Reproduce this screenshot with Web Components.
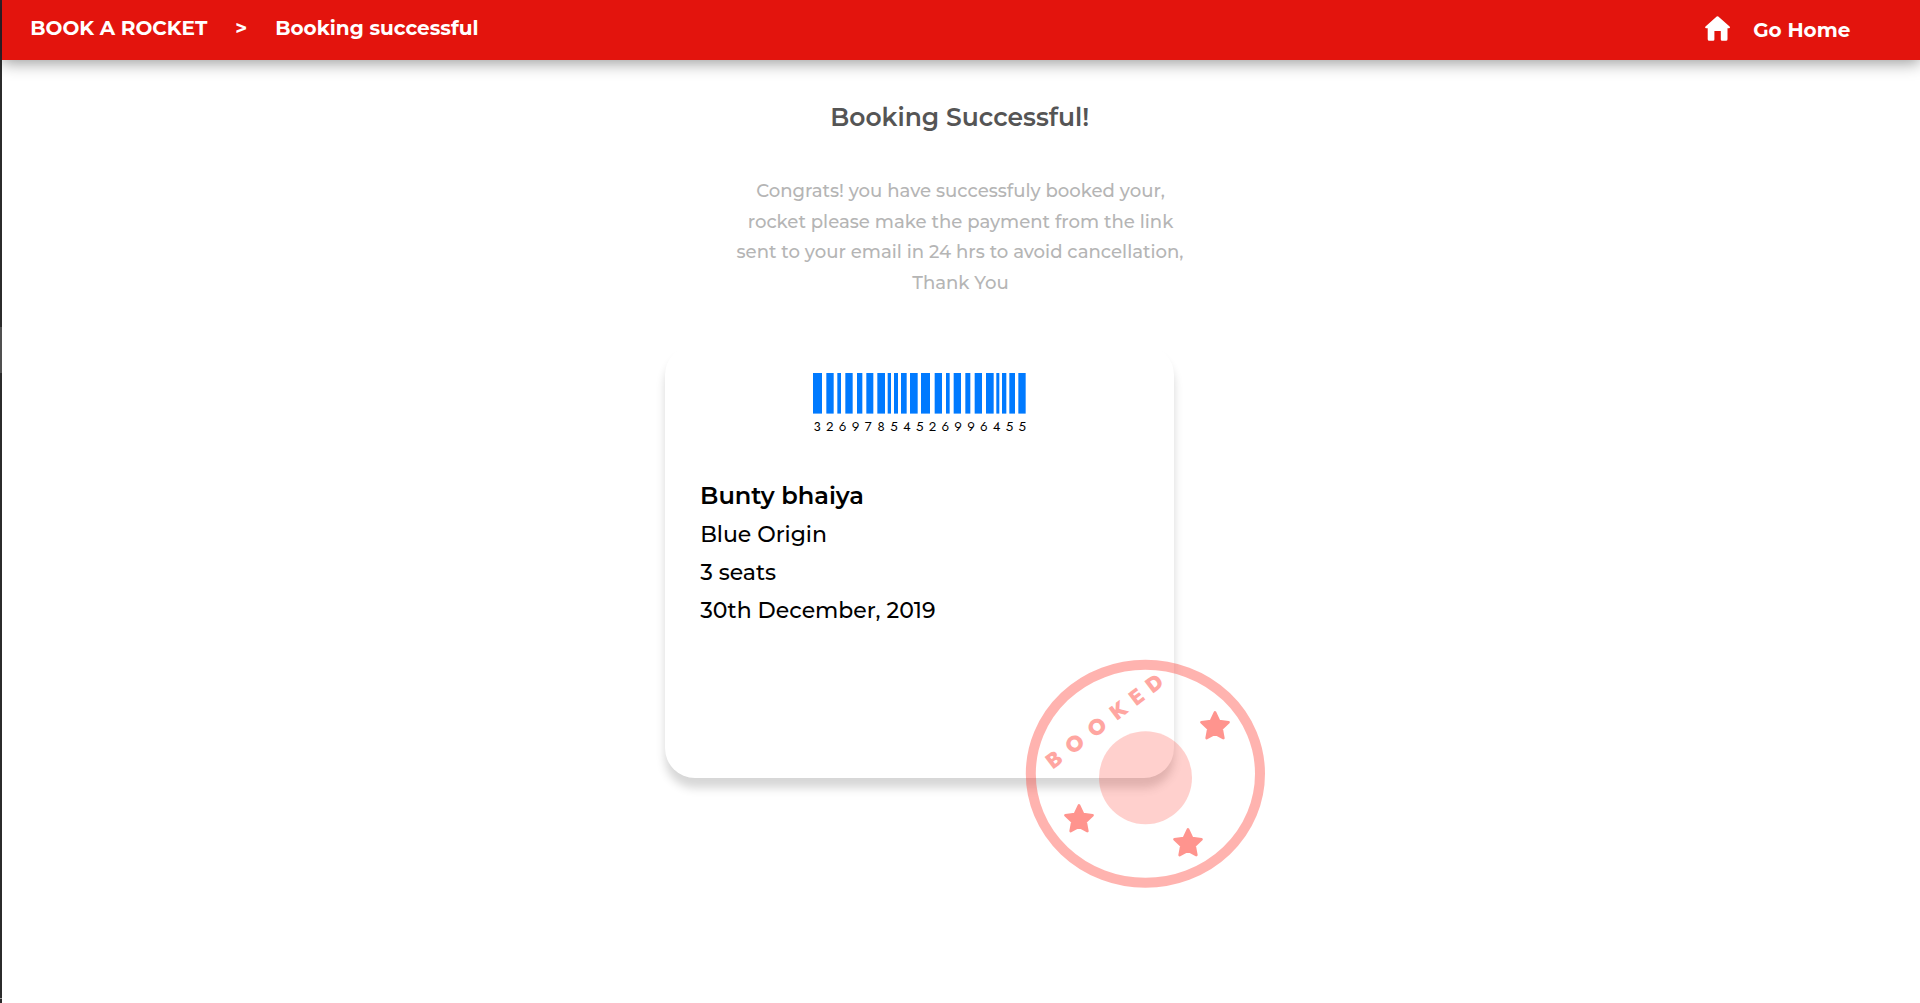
<!DOCTYPE html>
<html lang="en">
<head>
<meta charset="utf-8">
<title>Booking successful</title>
<style>
html,body{margin:0;height:100%;background:#fff;overflow:hidden}
body{font-family:Montserrat,Inter,"Open Sans",sans-serif}
</style>
</head>
<body>
<booking-page></booking-page>
<script>
class Base extends HTMLElement{
  constructor(){super();this.attachShadow({mode:'open'});}
  connectedCallback(){this.shadowRoot.innerHTML=this.render();}
}

/* One line of text on a fixed baseline, left-aligned or centred on its box. */
customElements.define('text-line',class extends Base{
  render(){
    const a=(n,d)=>this.getAttribute(n)||d;
    const w=+a('w'),s=+a('size'),h=+a('h','30'),mid=this.hasAttribute('center');
    return `<style>:host{display:block;width:${w}px;height:${h}px;flex:none}
    svg{display:block;overflow:visible}
    text{font-size:${s}px;font-weight:${a('weight','400')};fill:currentColor;text-anchor:${mid?'middle':'start'}}</style>
    <svg width="${w}" height="${h}"><text x="${mid?w/2:-s*0.04}" y="21">${this.textContent}</text></svg>`;
  }
});

customElements.define('window-edge',class extends Base{
  render(){return `<style>:host{display:flex;flex-direction:column;width:2px;height:1003px;flex:none}
  i{display:block;background:#2b2b2b}.t{height:60px;background:#33222a}.a{height:267px}.b{height:46px;background:#505050}.c{height:625px}.d{height:1px;background:#999}.e{flex:1}</style>
  <i class="t"></i><i class="a"></i><i class="b"></i><i class="c"></i><i class="d"></i><i class="e"></i>`;}
});

customElements.define('home-icon',class extends Base{
  render(){return `<style>:host{display:block;width:25px;height:25px}svg{display:block}</style>
  <svg width="25" height="25" viewBox="0 0 25 25"><path fill="#fff" d="M11.7.5q.8-.6 1.6 0l11.3 10.1q.5.6.3 1.1-.2.4-.8.5h-1.6v11q0 1.6-1.6 1.6h-3.8q-1.3 0-1.3-1.4v-8.3H9.4v8.3q0 1.4-1.3 1.4H4.3q-1.6 0-1.6-1.6v-11H1q-.6-.1-.8-.5-.2-.5.3-1.1z"/></svg>`;}
});

customElements.define('top-bar',class extends Base{
  render(){return `<style>:host{display:flex;box-sizing:border-box;height:60px;padding:14px 69px 0 28.6px;background:#e3140d;color:#fff;box-shadow:0 3px 15px rgba(0,0,0,.4);align-items:flex-start}
  nav{display:flex;gap:29px;flex:1}a{display:flex;gap:24px;align-items:flex-start}
  home-icon{margin-top:2px}text-line.go{margin-top:2px}</style>
  <nav><text-line w="176.5" size="20" weight="700">BOOK A ROCKET</text-line>
  <text-line w="11" size="20" weight="700">&gt;</text-line>
  <text-line w="202" size="20" weight="700">Booking successful</text-line></nav>
  <a><home-icon></home-icon><text-line class="go" w="97" size="20" weight="700">Go Home</text-line></a>`;}
});

customElements.define('bar-code',class extends Base{
  render(){
    const bars=[[24,51],[64,86],[97,108],[121,143],[156,172],[184,205],[217,240],[248,258],[267,279],[288,305],[315,338],[348,375],[389,411],[423,434],[446,468],[481,496],[509,531],[543,566],[574,583],[591,604],[613,630],[640,662]];
    const r=bars.map(([a,b])=>`<rect x="${(a-24)/3}" y="0" width="${(b-a)/3}" height="40.6"/>`).join('');
    const xs=[...Array(17)].map((_,i)=>(4+12.83*i).toFixed(2)).join(' ');
    return `<style>:host{display:block;width:213px;height:62px}svg{display:block;overflow:visible}
    text{font:400 13.2px Jost,Lato,sans-serif;text-anchor:middle}</style>
    <svg width="213" height="62"><g fill="#007aff">${r}</g><text x="${xs}" y="58">32697854526996455</text></svg>`;
  }
});

customElements.define('booked-stamp',class extends Base{
  render(){
    const star=(x,y)=>{
      let p=[];
      for(let i=0;i<10;i++){const r=i%2?7:14.2,t=-Math.PI/2+i*Math.PI/5;p.push((x+r*Math.cos(t)).toFixed(2)+','+(y+r*Math.sin(t)).toFixed(2));}
      return `<polygon points="${p.join(' ')}"/>`;
    };
    return `<style>:host{display:block;width:240px;height:230px}svg{display:block;overflow:visible}
    text{font:800 21.5px Jost,Montserrat,sans-serif;text-anchor:middle}</style>
    <svg width="240" height="230" viewBox="1025 659 240 230" fill="#ff3b30">
    <ellipse cx="1145.4" cy="773.8" rx="114.6" ry="109" fill="none" stroke="#ff3b30" stroke-width="10" opacity=".39"/>
    <circle cx="1145.5" cy="777.7" r="46.5" opacity=".24"/>
    <g opacity=".54" stroke="#ff3b30" stroke-width="2.6" stroke-linejoin="round">${star(1215,726.6)}${star(1079,819.6)}${star(1188,843.6)}</g>
    <text opacity=".45" transform="translate(1054 759.7) rotate(-37.2)" x="0 26 54 80.9 103.7 125.8" y="7.2">BOOKED</text></svg>`;
  }
});

customElements.define('ticket-card',class extends Base{
  render(){return `<style>:host{display:flex;flex-direction:column;position:relative;box-sizing:border-box;width:509px;height:433px;padding:28px 36px 0;border-radius:30px;background:#fff;box-shadow:0 10px 10px rgba(0,0,0,.16);color:#000}
  bar-code{margin-left:112px;margin-bottom:48px}
  booked-stamp{position:absolute;left:360px;top:314px}</style>
  <bar-code></bar-code><slot></slot><booked-stamp></booked-stamp>`;}
});

customElements.define('booking-page',class extends Base{
  render(){return `<style>:host{display:flex;height:1003px}
  main{flex:1;display:flex;flex-direction:column}
  section{display:flex;flex-direction:column;align-items:center;padding:45px 2px 0 0}
  .title{color:#555}.copy{display:flex;flex-direction:column;align-items:center;margin-top:41px;color:#b5b5b5}
  ticket-card{align-self:flex-start;margin:46.6px 0 0 663px}</style>
  <window-edge></window-edge>
  <main><top-bar></top-bar>
  <section>
    <text-line center class="title" w="257.5" size="25" weight="600">Booking Successful!</text-line>
    <div class="copy">
      <text-line center w="409" h="30.6" size="18.1" weight="500">Congrats! you have successfuly booked your,</text-line>
      <text-line center w="425" h="30.6" size="18.1" weight="500">rocket please make the payment from the link</text-line>
      <text-line center w="446" h="30.6" size="18.1" weight="500">sent to your email in 24 hrs to avoid cancellation,</text-line>
      <text-line center w="97" h="30.6" size="18.1" weight="500">Thank You</text-line>
    </div>
    <ticket-card>
      <text-line w="162" h="38" size="24.1" weight="600">Bunty bhaiya</text-line>
      <text-line w="125" h="38" size="22" weight="500">Blue Origin</text-line>
      <text-line w="76" h="38" size="22" weight="500">3 seats</text-line>
      <text-line w="235" h="38" size="22" weight="500">30th December, 2019</text-line>
    </ticket-card>
  </section></main>`;}
});
</script>
</body>
</html>
